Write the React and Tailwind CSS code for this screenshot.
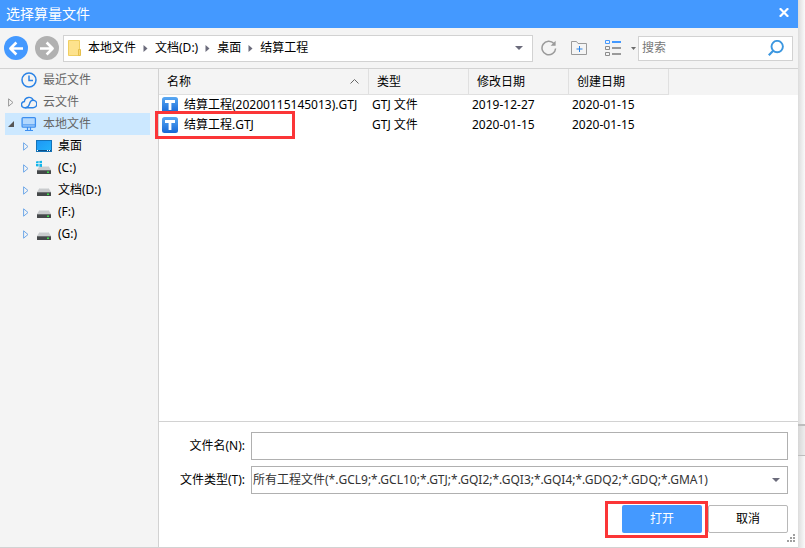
const drives = [
  { name: '桌面', icon: DesktopIcon },
  { name: '(C:)', icon: SystemDriveIcon },
  { name: '文档(D:)', icon: DriveIcon },
  { name: '(F:)', icon: DriveIcon },
  { name: '(G:)', icon: DriveIcon },
];

const files = [
  { name: '结算工程(20200115145013).GTJ', type: 'GTJ 文件', modified: '2019-12-27', created: '2020-01-15' },
  { name: '结算工程.GTJ', type: 'GTJ 文件', modified: '2020-01-15', created: '2020-01-15', marked: true },
];

const path = ['本地文件', '文档(D:)', '桌面', '结算工程'];

function DesktopIcon() {
  return (
    <svg width="16" height="12" viewBox="0 0 16 12">
      <defs>
        <linearGradient id="desk" x1="0" y1="0" x2="1" y2="1">
          <stop offset="0" stopColor="#1e96f5" />
          <stop offset="1" stopColor="#22b4fb" />
        </linearGradient>
      </defs>
      <rect x="0.5" y="0.5" width="15" height="11" fill="url(#desk)" stroke="#1573b8" />
      <path d="M1 10.5h14" stroke="#0b4f88" />
      <path d="M1 10.5h1M11 10.5h1M13 10.5h1" stroke="#fff" />
    </svg>
  );
}

function DriveBody() {
  return (
    <>
      <path d="M3.5 6h9L15 10H1z" fill="#c9cbcd" />
      <path d="M3.5 6h9l.6 1H2.9z" fill="#dfe1e2" />
      <rect x="1" y="10" width="14" height="4" rx="0.5" fill="#45484a" />
      <rect x="1" y="10" width="14" height="1" fill="#6b6e70" />
      <rect x="11" y="11.5" width="2" height="1.5" fill="#3ee04a" />
    </>
  );
}

function DriveIcon() {
  return (
    <svg width="16" height="16" viewBox="0 0 16 16">
      <DriveBody />
    </svg>
  );
}

function SystemDriveIcon() {
  return (
    <svg width="16" height="16" viewBox="0 0 16 16">
      <DriveBody />
      <path d="M0 1.5l2.6-.4v2.2H0zM3.4 1L6 .7v2.6H3.4zM0 4.1h2.6v2.5L0 6.2zM3.4 4.1H6v2.9l-2.6-.3z" fill="#12b5ea" />
    </svg>
  );
}

function ClockIcon() {
  return (
    <svg width="16" height="16" viewBox="0 0 16 16" fill="none" stroke="#2b83e6" strokeWidth="1.5">
      <circle cx="8" cy="8" r="7" />
      <path d="M8 3.5V8.5h4" />
    </svg>
  );
}

function CloudIcon() {
  return (
    <svg width="16" height="14" viewBox="0 0 16 14" fill="none" stroke="#2b83e6" strokeWidth="1.4" strokeLinecap="round">
      <path d="M3.9 12.8A3.1 3.1 0 0 1 3.4 6.5 4.6 4.6 0 0 1 12.2 5.2 3.8 3.8 0 0 1 11.8 12.8H3.9" />
      <path d="M12.2 5.2C9.4 5 8.8 7.4 8.4 9.2 8 11 6.8 12.4 4.6 12.8" />
    </svg>
  );
}

function MonitorIcon() {
  return (
    <svg width="16" height="16" viewBox="0 0 16 16" fill="none" stroke="#3c8ef0">
      <rect x="1.1" y="1.6" width="13.3" height="9.6" rx="1" fill="#b3d8fd" strokeWidth="1.3" />
      <path d="M2 8.9h12" />
      <path d="M6.5 11v3.5M9.5 11v3.5M4 14.5h8" strokeWidth="1.2" />
    </svg>
  );
}

function FileIcon() {
  return (
    <svg className="shrink-0" width="16" height="16" viewBox="0 0 16 16">
      <defs>
        <linearGradient id="gtj" x1="0" y1="0" x2="0" y2="1">
          <stop offset="0" stopColor="#5aa9f3" />
          <stop offset="1" stopColor="#1668d6" />
        </linearGradient>
      </defs>
      <rect width="16" height="16" rx="2.5" fill="url(#gtj)" />
      <path d="M3 4.5h10M8 4.5V13" stroke="#fff" strokeWidth="2.8" />
    </svg>
  );
}

function Expander({ className }) {
  return (
    <svg className={className} width="6" height="9" viewBox="0 0 6 9" fill="none" stroke="currentColor">
      <path d="M0.6 0.8v7.4L5 4.5z" />
    </svg>
  );
}

function DownArrow({ className }) {
  return (
    <svg className={className} width="8" height="4" viewBox="0 0 8 4">
      <path d="M0 0h8L4 4z" fill="#6b6b7b" />
    </svg>
  );
}

function TitleBar() {
  return (
    <header className="flex h-7 items-center justify-between bg-[#4499ff] pl-1.5 pr-2 text-white">
      <h1 className="text-[14px] leading-5">选择算量文件</h1>
      <button type="button" aria-label="关闭" className="flex h-3 w-3 items-center justify-center pb-1">
        <svg className="shrink-0" width="10" height="9" viewBox="0 0 10 9" stroke="#fff" strokeWidth="2.2">
          <path d="M0.8 0.3l8.4 8.4M9.2 0.3L0.8 8.7" />
        </svg>
      </button>
    </header>
  );
}

function Toolbar() {
  return (
    <div className="flex h-[41px] items-center border-b border-[#d2d2d2] pl-1 pr-[5px]">
      <button type="button" aria-label="后退" className="shrink-0">
        <svg width="24" height="24" viewBox="0 0 24 24" fill="none" stroke="#fff" strokeWidth="2.6">
          <circle cx="12" cy="12" r="12" fill="#4499ff" stroke="none" />
          <path d="M19 12.5H7M12.4 6.5l-6 6 6 6" strokeLinejoin="round" />
        </svg>
      </button>
      <button type="button" aria-label="前进" className="ml-[7px] shrink-0">
        <svg width="24" height="24" viewBox="0 0 24 24" fill="none" stroke="#fff" strokeWidth="2.6">
          <circle cx="12" cy="12" r="12" fill="#b1b1b1" stroke="none" />
          <path d="M5 12.5h12M11.6 6.5l6 6-6 6" strokeLinejoin="round" />
        </svg>
      </button>

      {/* Address */}
      <nav aria-label="路径" className="ml-1 flex h-[27px] min-w-0 flex-1 items-center border border-[#d2d2d2] bg-white pl-1 pr-[9px]">
        <svg className="mr-1.5 shrink-0" width="14" height="16" viewBox="0 0 14 16">
          <path d="M0.5 0.5h11v15H0.5z" fill="#fde28d" stroke="#f0cf62" />
          <path d="M10.5 9.5h2v6h-2z" fill="#fbd871" stroke="#e5bf4c" />
        </svg>
        <ol className="flex flex-1 items-center">
          {path.map((p, i) => (
            <li key={p} className="flex items-center whitespace-nowrap">
              {i > 0 && (
                <svg className="mx-[7px]" width="5" height="7" viewBox="0 0 5 7">
                  <path d="M0.5 0v7L4.5 3.5z" fill="#6b6b7b" />
                </svg>
              )}
              <a href="#">{p}</a>
            </li>
          ))}
        </ol>
        <button type="button" aria-label="展开路径">
          <DownArrow />
        </button>
      </nav>

      <button type="button" aria-label="刷新" className="ml-2 shrink-0">
        <svg width="16" height="16" viewBox="0 0 16 16" fill="none" stroke="#9a9a9a" strokeWidth="1.5">
          <path d="M14.6 8.5A6.8 6.8 0 1 1 12.9 3.5" />
          <path d="M14.6 0.8v5H9.6z" fill="#9a9a9a" stroke="none" />
        </svg>
      </button>
      <button type="button" aria-label="新建文件夹" className="ml-3.5 shrink-0">
        <svg width="16" height="14" viewBox="0 0 16 14" fill="none" stroke="#9a9a9a">
          <path d="M0.5 13.5V0.5h5l1.5 2h8.5v11z" />
          <path d="M8.5 5v6M5.5 8h6" stroke="#2b83e6" />
        </svg>
      </button>
      <button type="button" aria-label="视图" className="ml-[18px] flex shrink-0 items-center">
        <svg width="16" height="16" viewBox="0 0 16 16" fill="none">
          <path d="M0.5 0.5h4v3h-4z" stroke="#4499ff" />
          <path d="M7 2h9" stroke="#4499ff" strokeWidth="2" />
          <path d="M0.5 6.5h4v3h-4zM0.5 12.5h4v3h-4z" stroke="#8c8c8c" />
          <path d="M7 8h9M7 14h9" stroke="#9a9a9a" strokeWidth="2" />
        </svg>
        <svg className="ml-2.5" width="5" height="3" viewBox="0 0 5 3">
          <path d="M0 0h5L2.5 3z" fill="#6b6b6b" />
        </svg>
      </button>

      {/* Search */}
      <label className="ml-0.5 flex h-[25px] w-[155px] shrink-0 items-center border border-[#d2d2d2] bg-white pl-[3px] pr-2">
        <input type="text" aria-label="搜索" placeholder="搜索" className="min-w-0 flex-1 outline-none placeholder:text-[#777]" />
        <svg width="16" height="16" viewBox="0 0 16 16" fill="none" stroke="#3c97e0">
          <circle cx="9.2" cy="6.6" r="5.7" strokeWidth="1.9" />
          <path d="M5.2 10.8L0.8 15.2" strokeWidth="2.2" />
        </svg>
      </label>
    </div>
  );
}

function Sidebar() {
  return (
    <aside className="w-[159px] shrink-0 border-r border-[#d2d2d2] pl-[5px] pr-2">
      <ul className="text-[#666]">
        <li className="flex h-[22px] items-center gap-1.5 pl-4">
          <ClockIcon />
          最近文件
        </li>
        <li className="flex h-[22px] items-center gap-1.5 pl-[3px]">
          <Expander className="mr-px text-[#999]" />
          <CloudIcon />
          云文件
        </li>
        <li>
          <div className="flex h-[22px] items-center gap-1.5 bg-[#cce8ff] pl-[3px]">
            <svg className="mr-px" width="6" height="6" viewBox="0 0 6 6">
              <path d="M6 0v6H0z" fill="#555" />
            </svg>
            <MonitorIcon />
            本地文件
          </div>
          <ul className="text-black">
            {drives.map(({ name, icon: Icon }) => (
              <li key={name} className="flex h-[22px] items-center pl-[18px]">
                <Expander className="mr-[7px] text-[#6fa8e8]" />
                <span className="mr-1.5">
                  <Icon />
                </span>
                {name}
              </li>
            ))}
          </ul>
        </li>
      </ul>
    </aside>
  );
}

function FileTable() {
  return (
    <div className="flex-1">
      <table className="w-full table-fixed border-separate border-spacing-0 text-left">
        <colgroup>
          <col className="w-[210px]" />
          <col className="w-[100px]" />
          <col className="w-[100px]" />
          <col className="w-[100px]" />
          <col />
        </colgroup>
        <thead>
          <tr className="h-[26px] bg-[#f4f4f4]">
            <th className="border-b border-r border-[#e0e0e0] p-0 pl-2 font-normal">
              <div className="flex items-center justify-between pr-[9px]">
                名称
                <svg width="9" height="5" viewBox="0 0 9 5" fill="none" stroke="#666">
                  <path d="M0.5 4.5l4-4 4 4" />
                </svg>
              </div>
            </th>
            <th className="border-b border-r border-[#e0e0e0] p-0 pl-2 font-normal">类型</th>
            <th className="border-b border-r border-[#e0e0e0] p-0 pl-2 font-normal">修改日期</th>
            <th className="border-b border-r border-[#e0e0e0] p-0 pl-2 font-normal">创建日期</th>
            <td />
          </tr>
        </thead>
        <tbody>
          {files.map((f) => (
            <tr key={f.name} className="h-5">
              <td className="p-0 pl-[3px]">
                <div className="relative flex items-center gap-1.5 whitespace-nowrap">
                  <FileIcon />
                  {f.name}
                  {f.marked && (
                    <span className="pointer-events-none absolute -left-[7px] -top-1.5 h-7 w-[140px] border-3 border-[#fb3537]" />
                  )}
                </div>
              </td>
              <td className="p-0 pl-[3px]">{f.type}</td>
              <td className="p-0 pl-[3px]">{f.modified}</td>
              <td className="p-0 pl-[3px]">{f.created}</td>
              <td />
            </tr>
          ))}
        </tbody>
      </table>
    </div>
  );
}

function FileForm() {
  return (
    <form className="relative border-t border-[#d2d2d2] pb-3.5 pl-2.5 pr-2.5 pt-2.5">
      <div className="flex flex-col gap-1.5">
        <div className="flex items-center gap-1.5">
          <label htmlFor="file-name" className="w-[76px] text-right">文件名(N):</label>
          <input id="file-name" type="text" className="h-7 min-w-0 flex-1 border border-[#b0b0b0] bg-white px-0.5 outline-none" />
        </div>
        <div className="flex items-center gap-1.5">
          <label htmlFor="file-type" className="w-[76px] text-right">文件类型(T):</label>
          <div className="relative min-w-0 flex-1">
            <select id="file-type" className="block h-7 w-full appearance-none border border-[#b0b0b0] bg-white pl-px pr-6 text-[#333] outline-none">
              <option>所有工程文件(*.GCL9;*.GCL10;*.GTJ;*.GQI2;*.GQI3;*.GQI4;*.GDQ2;*.GDQ;*.GMA1)</option>
            </select>
            <DownArrow className="pointer-events-none absolute right-2 top-3" />
          </div>
        </div>
      </div>
      <div className="mt-[11px] flex justify-end gap-1.5">
        <div className="relative">
          <button type="button" className="h-7 w-20 rounded-xs bg-[#4499ff] text-white">打开</button>
          <span className="pointer-events-none absolute -bottom-[5px] -left-[17px] -right-1.5 -top-1 border-3 border-[#fb3537]" />
        </div>
        <button type="button" className="h-7 w-20 rounded-xs border border-[#b8b8b8] bg-white">取消</button>
      </div>

      {/* Resize grip */}
      <svg className="absolute bottom-1 right-0.5" width="9" height="9" viewBox="0 0 9 9" fill="#a0a0a0">
        <path d="M6 0h2v2h-2zM3 3h2v2h-2zM6 3h2v2h-2zM0 6h2v2h-2zM3 6h2v2h-2zM6 6h2v2h-2z" />
      </svg>
    </form>
  );
}

export default function App() {
  return (
    <div className="flex min-h-screen bg-[#f8f8f8] font-['Noto_Sans','Noto_Sans_CJK_SC',sans-serif] text-[12px] leading-4 text-black">
      <main className="flex min-w-0 flex-1 flex-col border-b border-[#d2d2d2] bg-[#f4f4f4]">
        <TitleBar />
        <Toolbar />
        <div className="flex flex-1">
          <Sidebar />
          <section className="flex min-w-0 flex-1 flex-col bg-white">
            <FileTable />
            <FileForm />
          </section>
        </div>
      </main>

      {/* Window behind the dialog */}
      <div className="flex w-[7px] shrink-0 flex-col justify-end bg-linear-to-r from-[#dcdcdc] to-[#fafafa] pb-[92px]">
        <div className="h-8 border-b border-t-2 border-[#bdbdbd] bg-linear-to-r from-[#d6d6d6] to-[#eeeeee]" />
      </div>
    </div>
  );
}
